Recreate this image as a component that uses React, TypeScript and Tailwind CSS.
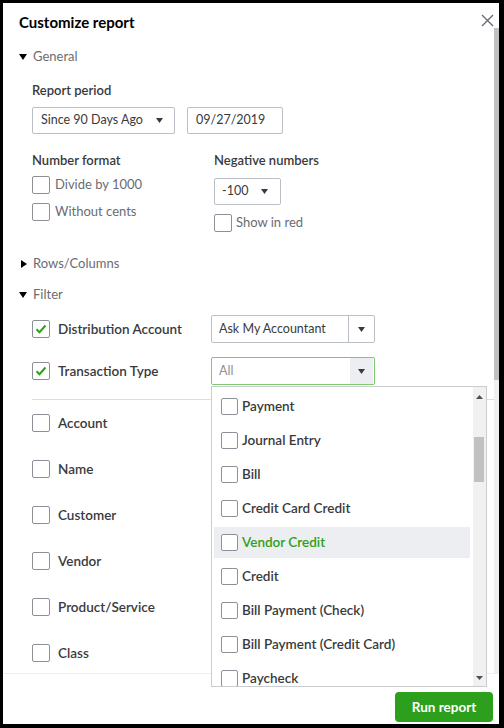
import React from "react";

const font = { fontFamily: "Lato, 'Open Sans', Arial, sans-serif" };

function Caret({ open }: { open: boolean }) {
  return open ? (
    <svg width="8" height="6" viewBox="0 0 8 6" className="shrink-0">
      <path d="M0 0h8L4 6z" fill="#000" />
    </svg>
  ) : (
    <svg width="6" height="8" viewBox="0 0 6 8" className="shrink-0">
      <path d="M0 0v8l6-4z" fill="#000" />
    </svg>
  );
}

function SmallArrow() {
  return (
    <svg width="7" height="5" viewBox="0 0 7 5">
      <path d="M0 0h7L3.5 5z" fill="#393a3d" />
    </svg>
  );
}

function Box({ checked = false, size = 18 }: { checked?: boolean; size?: number }) {
  return (
    <span
      className="flex shrink-0 items-center justify-center rounded-[2px] border border-[#8d9096] bg-white"
      style={{ width: size, height: size }}
    >
      {checked && (
        <svg width="12" height="10" viewBox="0 0 12 10">
          <path d="M1.5 5.2l3 3L10.5 1.5" fill="none" stroke="#2ca01c" strokeWidth="2" />
        </svg>
      )}
    </span>
  );
}

const sections = ["Account", "Name", "Customer", "Vendor", "Product/Service", "Class"];

const txTypes = [
  "Payment",
  "Journal Entry",
  "Bill",
  "Credit Card Credit",
  "Vendor Credit",
  "Credit",
  "Bill Payment (Check)",
  "Bill Payment (Credit Card)",
  "Paycheck",
];

export default function App() {
  return (
    <div
      className="h-[728px] w-[504px] border-b-[4px] border-l-[3px] border-r-[5px] border-t-[3px] border-black bg-white text-[#393a3d]"
      style={font}
    >
      <div className="relative flex h-full flex-col">
        <div className="flex min-h-0 flex-1">
          <div className="relative flex-1 overflow-hidden">
            {/* header */}
            <div className="flex justify-between pl-[16px] pt-[9px]">
              <h1 className="text-[15px] font-bold leading-[20px] text-[#000]">Customize report</h1>
              <svg width="13" height="13" viewBox="0 0 13 13" className="mt-[2px]">
                <path d="M1 1l11 11M12 1L1 12" stroke="#6b6c72" strokeWidth="1.4" />
              </svg>
            </div>

            <div className="mt-[15px] flex h-[20px] items-center gap-[6px] pl-[16px] text-[13px] text-[#6b6c72]">
              <Caret open />
              General
            </div>

            <div className="pl-[29px]">
              <div className="mt-[13px] h-[20px] text-[13px] font-semibold leading-[20px]">Report period</div>
              <div className="mt-[7px] flex gap-[12px]">
                <div className="flex h-[27px] w-[143px] items-center justify-between rounded-[2px] border border-[#babec5] pl-[8px] pr-[11px] text-[12.5px]">
                  Since 90 Days Ago
                  <SmallArrow />
                </div>
                <div className="flex h-[27px] w-[96px] items-center rounded-[2px] border border-[#babec5] pl-[8px] text-[12.5px]">
                  09/27/2019
                </div>
              </div>

              <div className="mt-[16px] flex">
                <div className="w-[182px]">
                  <div className="h-[20px] text-[13px] font-semibold leading-[20px]">Number format</div>
                  <label className="mt-[6px] flex h-[18px] items-center gap-[5px] text-[13px] text-[#6b6c72]">
                    <Box />
                    Divide by 1000
                  </label>
                  <label className="mt-[9px] flex h-[18px] items-center gap-[5px] text-[13px] text-[#6b6c72]">
                    <Box />
                    Without cents
                  </label>
                </div>
                <div>
                  <div className="h-[20px] text-[13px] font-semibold leading-[20px]">Negative numbers</div>
                  <div className="mt-[8px] flex h-[27px] w-[67px] items-center justify-between rounded-[2px] border border-[#babec5] pl-[7px] pr-[12px] text-[12.5px]">
                    -100
                    <SmallArrow />
                  </div>
                  <label className="mt-[9px] flex h-[18px] items-center gap-[4px] text-[13px] text-[#6b6c72]">
                    <Box />
                    Show in red
                  </label>
                </div>
              </div>
            </div>

            <div className="mt-[22px] flex h-[20px] items-center gap-[6px] pl-[18px] text-[13px] text-[#6b6c72]">
              <Caret open={false} />
              Rows/Columns
            </div>
            <div className="mt-[11px] flex h-[20px] items-center gap-[6px] pl-[16px] text-[13px] text-[#6b6c72]">
              <Caret open />
              Filter
            </div>

            <div className="pl-[29px]">
              <div className="mt-[10px] flex h-[28px] items-center">
                <label className="flex w-[179px] items-center gap-[8px] text-[13.5px] font-semibold">
                  <Box checked />
                  Distribution Account
                </label>
                <div className="flex h-[28px] w-[164px] items-center rounded-[2px] border border-[#babec5] text-[12.5px]">
                  <span className="flex-1 pl-[7px]">Ask My Accountant</span>
                  <span className="flex h-full w-[26px] items-center justify-center border-l border-[#babec5]">
                    <SmallArrow />
                  </span>
                </div>
              </div>
              <div className="mt-[14px] flex h-[28px] items-center">
                <label className="flex w-[179px] items-center gap-[8px] text-[13.5px] font-semibold">
                  <Box checked />
                  Transaction Type
                </label>
                <div className="flex h-[28px] w-[164px] items-center rounded-[2px] border border-[#7fc96f] text-[12.5px]">
                  <span className="flex-1 pl-[7px] text-[#8d9096]">All</span>
                  <span className="mr-[1px] flex h-[26px] w-[23px] items-center justify-center bg-[#eceef1]">
                    <SmallArrow />
                  </span>
                </div>
              </div>
              <div className="mt-[14px] h-px bg-[#dcdee2]" />
              {sections.map((s) => (
                <label key={s} className="flex h-[46px] items-center gap-[8px] text-[13.5px] font-semibold">
                  <Box />
                  {s}
                </label>
              ))}
            </div>
          </div>

          {/* page scrollbar */}
          <div className="w-[5px] pt-[25px]">
            <div className="h-[352px] bg-[#c1c1c1]" />
            <div className="h-[293px] bg-[#f0f0f0]" />
          </div>
        </div>

        <div className="flex h-[51px] shrink-0 justify-end border-t border-[#eceef1] pr-[6px] pt-[18px]">
          <button className="h-[30px] w-[98px] rounded-[4px] bg-[#2ca01c] text-[13.5px] font-bold text-white">
            Run report
          </button>
        </div>

        {/* transaction type dropdown */}
        <div className="absolute left-[208px] top-[383px] z-10 flex h-[301px] w-[276px] border border-[#c9ccd1] bg-white">
          <div className="flex flex-1 flex-col gap-[3px] overflow-hidden pl-[2px] pr-[3px] pt-[4px]">
            {txTypes.map((t) => {
              const hover = t === "Vendor Credit";
              return (
                <div
                  key={t}
                  className={`flex h-[31px] shrink-0 items-center gap-[4px] pl-[7px] text-[13.5px] font-semibold ${
                    hover ? "bg-[#eceef1] text-[#2ca01c]" : ""
                  }`}
                >
                  <Box size={17} />
                  {t}
                </div>
              );
            })}
          </div>
          <div className="relative w-[13px] bg-[#f1f1f1]">
            <svg width="7" height="4" viewBox="0 0 7 4" className="absolute left-[3px] top-[8px]">
              <path d="M0 4h7L3.5 0z" fill="#505050" />
            </svg>
            <div className="absolute left-[1px] top-[50px] h-[45px] w-[10px] bg-[#c1c1c1]" />
            <svg width="7" height="4" viewBox="0 0 7 4" className="absolute bottom-[6px] left-[3px]">
              <path d="M0 0h7L3.5 4z" fill="#505050" />
            </svg>
          </div>
        </div>
      </div>
    </div>
  );
}
